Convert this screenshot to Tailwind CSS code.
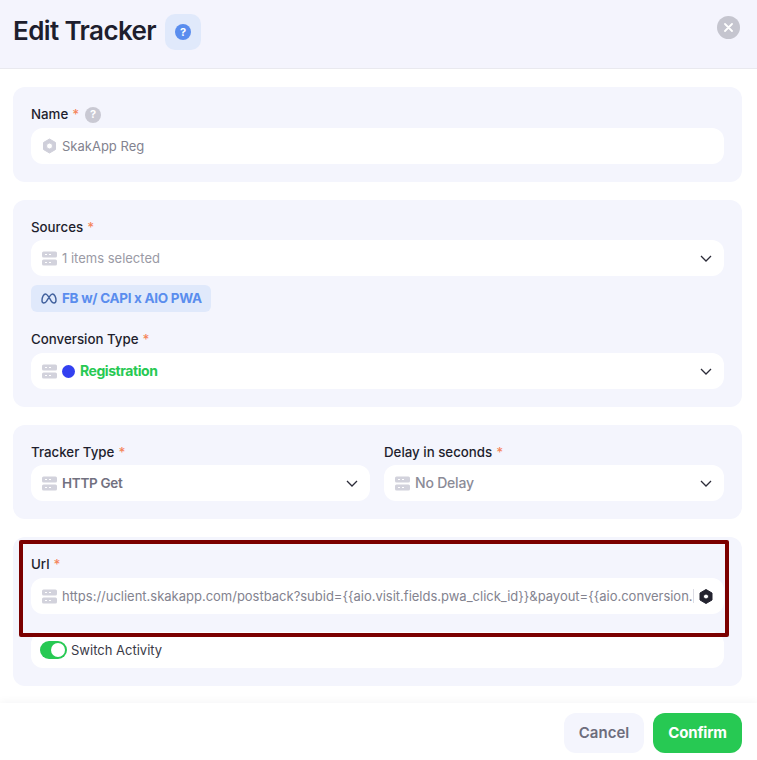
<!doctype html>
<html lang="en">
  <head>
    <meta charset="UTF-8" />
    <title>Edit Tracker</title>
    <script src="https://cdn.jsdelivr.net/npm/@tailwindcss/browser@4"></script>
  </head>
  <body class="bg-white">
    <div class="relative h-[760px] w-[757px] overflow-hidden bg-white font-['Inter',sans-serif] text-[#1e1e2d]">
      <!-- header -->
      <div class="flex h-[69px] items-start border-b border-[#e9e9ef] bg-[#f4f4fd] pl-[13px] pr-[17px]">
        <h1 class="mt-[13px] text-[26px] leading-[36px] font-semibold tracking-[-0.6px]">Edit Tracker</h1>
        <div class="mt-[14px] ml-[9px] flex h-9 w-9 items-center justify-center rounded-[10px] bg-[#e0e9fb]">
          <div class="flex h-4 w-4 items-center justify-center rounded-full bg-[#5a8dee] text-[11px] leading-none font-bold text-white">?</div>
        </div>
        <div class="mt-4 ml-auto flex h-[23px] w-[23px] items-center justify-center rounded-full bg-[#c5c5cf]">
          <svg width="9" height="9" viewBox="0 0 9 9"><path d="M1 1l7 7M8 1L1 8" stroke="#fff" stroke-width="1.8" stroke-linecap="round" /></svg>
        </div>
      </div>

      <!-- form -->
      <div class="flex flex-col gap-[18px] pt-[18px] pr-[15px] pl-[13px]">
        <div class="rounded-xl bg-[#f4f5fd] p-[18px]">
          <div class="mb-1 flex h-[19px] items-center text-[13.3px] font-medium">
            Name <span class="ml-1 text-[#f4845a]">*</span>
            <span class="ml-[6px] flex h-4 w-4 items-center justify-center rounded-full bg-[#c9c9d3] text-[11px] font-bold text-white">?</span>
          </div>
          <div class="flex h-9 items-center rounded-xl bg-white pl-[11px] text-[13px] text-[#83838f]">
            <svg class="mr-[5px] shrink-0" width="15" height="16" viewBox="0 0 15 16"><path fill-rule="evenodd" d="M7.5 1l6 3.5v7L7.5 15l-6-3.5v-7zM7.5 5a3 3 0 100 6 3 3 0 000-6z" fill="#cfcfda" stroke="#cfcfda" stroke-linejoin="round" /></svg>
            <span class="pt-0.5">SkakApp Reg</span>
          </div>
        </div>

        <div class="rounded-xl bg-[#f4f5fd] p-[18px]">
          <div class="mb-1 flex h-[18px] items-center pt-0.5 text-[13.3px] font-medium">Sources <span class="ml-1 text-[#f4845a]">*</span></div>
          <div class="flex h-9 items-center rounded-xl bg-white px-3 pl-[11px] text-[13px] text-[#9a9aa5]">
            <svg class="mr-[5px] shrink-0" width="15" height="15" viewBox="0 0 15 15"><rect y="0.5" width="15" height="6" rx="1.5" fill="#d2d2dc" /><rect y="8.5" width="15" height="6" rx="1.5" fill="#d2d2dc" /><path d="M3 3.5h2M7 3.5h2M3 11.5h2M7 11.5h2" stroke="#fff" /></svg>
            <span class="pt-0.5">1 items selected</span>
            <svg class="ml-auto" width="12" height="7" viewBox="0 0 12 7"><path d="M1 1l5 5 5-5" fill="none" stroke="#2b2b38" stroke-width="1.3" /></svg>
          </div>
          <div class="mt-[9px] inline-flex h-[27px] w-[180px] items-center rounded-md bg-[#e0e9fb] pl-[10px] text-[13.5px] font-bold tracking-[-0.3px] text-[#5a8dee]">
            <svg class="mr-[5px] shrink-0" width="16" height="11" viewBox="0 0 16 11"><path d="M2.5 10C1.3 10 1 8.800 1 7.500 1 4 2.800 1 4.500 1 6.500 1 8.500 5 10.500 8.500 11.300 9.700 12.200 10 13 10 14.300 10 15 9 15 7.300 15 4 13.300 1 11.500 1 9.500 1 7 6 5.500 8.300 4.500 9.700 3.500 10 2.500 10z" fill="none" stroke="#3f5f9c" stroke-width="1.400" /></svg>
            FB w/ CAPI x AIO PWA
          </div>
          <div class="mt-[18px] mb-[5px] flex h-[18px] items-center pt-0.5 text-[13.3px] font-medium">Conversion Type <span class="ml-1 text-[#f4845a]">*</span></div>
          <div class="flex h-9 items-center rounded-xl bg-white px-3 pl-[11px] text-sm">
            <svg class="mr-[5px] shrink-0" width="15" height="15" viewBox="0 0 15 15"><rect y="0.5" width="15" height="6" rx="1.5" fill="#d2d2dc" /><rect y="8.5" width="15" height="6" rx="1.5" fill="#d2d2dc" /><path d="M3 3.500h2M7 3.500h2M3 11.500h2M7 11.500h2" stroke="#fff" /></svg>
            <span class="mr-[5px] h-[13px] w-[13px] rounded-full bg-[#3340f0]"></span>
            <span class="font-bold tracking-[-0.45px] text-[#27c953]">Registration</span>
            <svg class="ml-auto" width="12" height="7" viewBox="0 0 12 7"><path d="M1 1l5 5 5-5" fill="none" stroke="#2b2b38" stroke-width="1.3" /></svg>
          </div>
        </div>

        <div class="flex gap-[14px] rounded-xl bg-[#f4f5fd] p-[18px]">
          <div class="w-[339px]">
            <div class="mb-1 flex h-[18px] items-center pt-0.5 text-[13.3px] font-medium">Tracker Type <span class="ml-1 text-[#f4845a]">*</span></div>
            <div class="flex h-9 items-center rounded-xl bg-white px-3 pl-[11px] text-[13.5px] font-semibold tracking-[-0.3px] text-[#71717f]">
              <svg class="mr-[5px] shrink-0" width="15" height="15" viewBox="0 0 15 15"><rect y="0.5" width="15" height="6" rx="1.5" fill="#d2d2dc" /><rect y="8.5" width="15" height="6" rx="1.5" fill="#d2d2dc" /><path d="M3 3.500h2M7 3.500h2M3 11.500h2M7 11.500h2" stroke="#fff" /></svg>
              HTTP Get
              <svg class="ml-auto" width="12" height="7" viewBox="0 0 12 7"><path d="M1 1l5 5 5-5" fill="none" stroke="#2b2b38" stroke-width="1.3" /></svg>
            </div>
          </div>
          <div class="flex-1">
            <div class="mb-1 flex h-[18px] items-center pt-0.5 text-[13.3px] font-medium">Delay in seconds <span class="ml-1 text-[#f4845a]">*</span></div>
            <div class="flex h-9 items-center rounded-xl bg-white px-3 pl-[11px] text-sm font-medium tracking-[-0.2px] text-[#8b8b97]">
              <svg class="mr-[5px] shrink-0" width="15" height="15" viewBox="0 0 15 15"><rect y="0.5" width="15" height="6" rx="1.5" fill="#d2d2dc" /><rect y="8.5" width="15" height="6" rx="1.5" fill="#d2d2dc" /><path d="M3 3.500h2M7 3.500h2M3 11.500h2M7 11.500h2" stroke="#fff" /></svg>
              No Delay
              <svg class="ml-auto" width="12" height="7" viewBox="0 0 12 7"><path d="M1 1l5 5 5-5" fill="none" stroke="#2b2b38" stroke-width="1.3" /></svg>
            </div>
          </div>
        </div>

        <div class="rounded-xl bg-[#f4f5fd] p-[18px]">
          <div class="mb-[5px] flex h-[18px] items-center pt-0.5 text-[13.3px] font-medium">Url <span class="ml-1 text-[#f4845a]">*</span></div>
          <div class="flex h-9 items-center rounded-xl bg-white pr-[10px] pl-[11px] text-[13px] tracking-[-0.01px] text-[#83838f]">
            <svg class="mr-[5px] shrink-0" width="15" height="15" viewBox="0 0 15 15"><rect y="0.5" width="15" height="6" rx="1.5" fill="#d2d2dc" /><rect y="8.5" width="15" height="6" rx="1.5" fill="#d2d2dc" /><path d="M3 3.500h2M7 3.500h2M3 11.500h2M7 11.500h2" stroke="#fff" /></svg>
            <span class="whitespace-nowrap pt-0.5">https://uclient.skakapp.com/postback?subid={{aio.visit.fields.pwa_click_id}}&amp;payout={{aio.conversion.</span>
            <span class="h-[14px] w-px bg-[#dcdce4]"></span>
            <svg class="ml-auto shrink-0" width="16" height="17" viewBox="0 0 16 17"><path fill-rule="evenodd" d="M8 1.500l6 3.500v7l-6 3.500L2 12V5zM8 6a2.500 2.500 0 100 5 2.500 2.500 0 000-5z" fill="#23232f" stroke="#23232f" stroke-linejoin="round" /></svg>
          </div>
          <div class="mt-[18px] flex h-9 items-center rounded-xl bg-white pl-[9px] text-[13px] text-[#3a3a47]">
            <div class="mr-[4px] flex h-[18px] w-[27px] items-center justify-end rounded-full bg-[#27c953] pr-[2px]">
              <div class="h-[14px] w-[14px] rounded-full bg-white"></div>
            </div>
            <span class="pt-0.5">Switch Activity</span>
          </div>
        </div>
      </div>

      <!-- footer -->
      <div class="mt-[17px] flex h-[57px] justify-end gap-[9px] bg-white px-[15px] pt-[10px] shadow-[0_-2px_8px_rgba(30,30,60,0.04)]">
        <button class="h-10 w-20 rounded-xl bg-[#f4f5fd] text-[15px] font-semibold text-[#6d6d7c]">Cancel</button>
        <button class="h-10 w-[89px] rounded-xl bg-[#27c953] text-[15px] font-bold tracking-[-0.2px] text-white">Confirm</button>
      </div>

      <!-- red highlight drawn over the screenshot -->
      <div class="absolute top-[540px] left-[19px] h-[97px] w-[710px] rounded-[2px] border-4 border-[#7b0000]"></div>
    </div>
  </body>
</html>
